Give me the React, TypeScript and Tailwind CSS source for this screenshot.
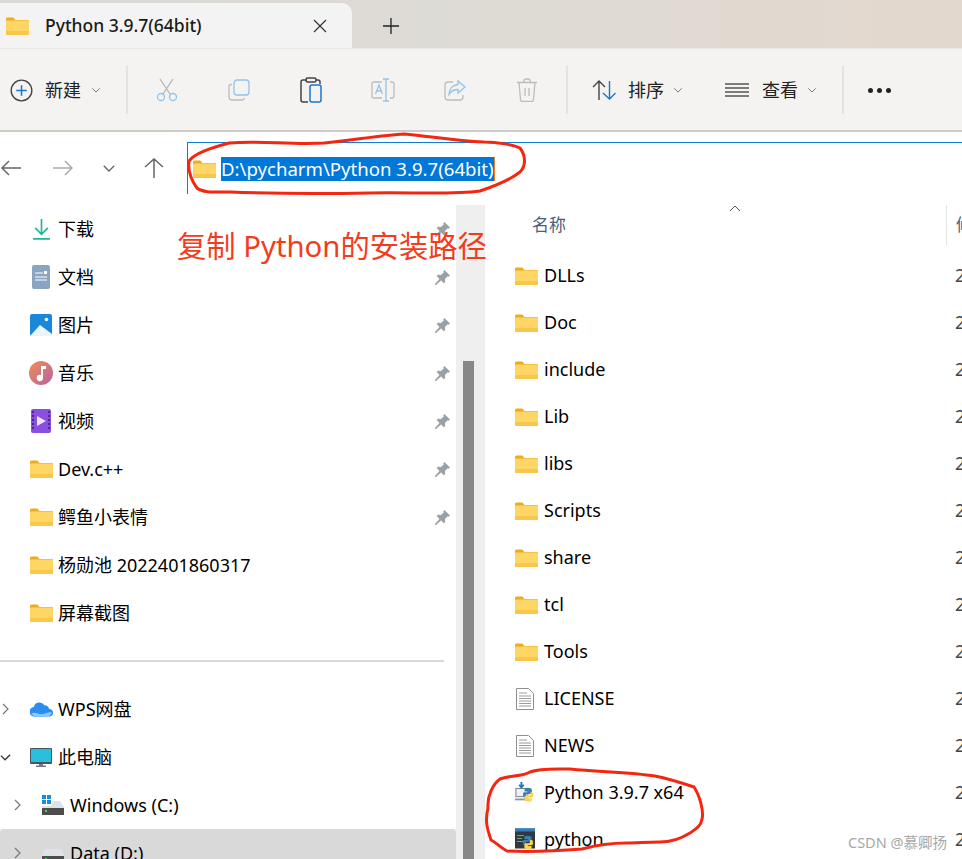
import React from 'react';

const FONT = '"Noto Sans", "Noto Sans CJK SC", sans-serif';

function Folder({ className = 'w-[23px] h-[18px]' }: { className?: string }) {
  return (
    <svg viewBox="0 0 24 18" preserveAspectRatio="none" className={className}>
      <path d="M0 2a1.500 1.500 0 0 1 1.500-1.500h6L10 3h13a1 1 0 0 1 1 1v4H0z" fill="#f0ab1a" />
      <rect x="0" y="3.500" width="24" height="14.500" rx="1" fill="#fdd666" />
      <rect x="0" y="14" width="24" height="4" rx="1" fill="#f8c64a" />
    </svg>
  );
}

function Chevron({ dir = 'down', className = '' }: { dir?: 'down' | 'right'; className?: string }) {
  return (
    <svg viewBox="0 0 12 12" className={className} fill="none" stroke="currentColor" strokeWidth="1.200">
      {dir === 'down' ? <path d="M1.500 4l4.500 4.500L10.500 4" /> : <path d="M4 1l5 5-5 5" />}
    </svg>
  );
}

function Pin() {
  return (
    <svg viewBox="0 0 18 18" className="w-[17px] h-[17px]" fill="#98a1a8">
      <path d="M11 1l6 6-1.400 1.200-1-.6-3 3 .3 3.200-1.400 1.400-3-3L2 17l-1 0 0-1 4.800-5.500-3-3 1.400-1.400 3.200.3 3-3-.6-1z" />
    </svg>
  );
}

function Sep() {
  return <div className="w-[2px] h-[48px] bg-[#e3e2e0]" />;
}

function ToolIcon({ children }: { children: React.ReactNode }) {
  return <div className="w-[72px] flex items-center justify-center">{children}</div>;
}

function NavItem({ icon, label, pin }: { icon: React.ReactNode; label: string; pin?: boolean }) {
  return (
    <div className="h-[48px] flex items-center">
      <div className="w-[30px] ml-[26px] flex justify-center shrink-0">{icon}</div>
      <span className="ml-[2px] text-[18px] text-black whitespace-nowrap">{label}</span>
      {pin && (
        <div className="ml-auto mr-[5px]">
          <Pin />
        </div>
      )}
    </div>
  );
}

function DriveIcon({ win }: { win?: boolean }) {
  return (
    <svg viewBox="0 0 22 20" className="w-[22px] h-[20px]">
      {win && (
        <g fill="#1a8ce0">
          <rect x="0" y="0" width="4" height="4" />
          <rect x="5" y="0" width="4" height="4" />
          <rect x="0" y="5" width="4" height="4" />
          <rect x="5" y="5" width="4" height="4" />
        </g>
      )}
      <path d={win ? 'M0 11h9l2-5h7l4 6v1H0z' : 'M0 12l3-6h16l3 6v1H0z'} fill="#dfe2e6" />
      <rect x="0" y="13" width="22" height="7" fill="#4d4d4d" />
      <rect x="3" y="15" width="2" height="2" fill="#3fdc4a" />
    </svg>
  );
}

function TextFile() {
  return (
    <svg viewBox="0 0 18 22" className="w-[18px] h-[22px] mr-[4px]" fill="none">
      <path d="M.5.5h12l5 5v16H.5z" fill="#fff" stroke="#8f8f8f" />
      <path d="M3 5h8M3 8h12M3 10.500h12M3 13h12M3 15.500h12M3 18h12" stroke="#9a9a9a" />
    </svg>
  );
}

function Snake({ x, y }: { x: number; y: number }) {
  return (
    <g transform={`translate(${x} ${y})`}>
      <path d="M6 0c-3 0-4 1-4 3v2H7v1H1.500C0 6 0 8 0 9.500S.5 13 2 13h2v-2.500c0-1.300 1-2 2-2h4c1 0 2-1 2-2V3c0-2-2-3-6-3z" fill="#3d7cb2" />
      <path d="M8 19c3 0 4-1 4-3v-2H7v-1h5.500c1.500 0 1.500-2 1.500-3.500S13.500 6 12 6h-2v2.500c0 1.300-1 2-2 2H4c-1 0-2 1-2 2V16c0 2 2 3 6 3z" fill="#fcd54c" />
    </g>
  );
}

function InstallerIcon() {
  return (
    <svg viewBox="0 0 24 24" className="w-[24px] h-[24px] mr-[2px]">
      <rect x="1" y="7" width="13" height="9" fill="#eef1f4" stroke="#6b7680" />
      <path d="M0 18h14v2H0z" fill="#8c96a0" />
      <path d="M7 0v5M4.500 3L7 6l2.500-3" stroke="#1778cf" strokeWidth="2" fill="none" />
      <g transform="scale(.8) translate(11 8)">
        <Snake x={0} y={0} />
      </g>
    </svg>
  );
}

function PythonConsole() {
  return (
    <svg viewBox="0 0 22 22" className="w-[23px] h-[23px] mr-[2px]">
      <rect x="0" y="0" width="20" height="20" fill="#2e3a40" />
      <rect x="0" y="0" width="20" height="3" fill="#2f7fc4" />
      <path d="M2 7h7M2 10h5M2 13h6" stroke="#57b85a" />
      <g transform="scale(.72) translate(11 10)">
        <Snake x={0} y={0} />
      </g>
    </svg>
  );
}

const files: { name: string; kind: 'folder' | 'text' | 'installer' | 'console' }[] = [
  { name: 'DLLs', kind: 'folder' },
  { name: 'Doc', kind: 'folder' },
  { name: 'include', kind: 'folder' },
  { name: 'Lib', kind: 'folder' },
  { name: 'libs', kind: 'folder' },
  { name: 'Scripts', kind: 'folder' },
  { name: 'share', kind: 'folder' },
  { name: 'tcl', kind: 'folder' },
  { name: 'Tools', kind: 'folder' },
  { name: 'LICENSE', kind: 'text' },
  { name: 'NEWS', kind: 'text' },
  { name: 'Python 3.9.7 x64', kind: 'installer' },
  { name: 'python', kind: 'console' },
];

function FileRow({ name, kind }: { name: string; kind: string }) {
  return (
    <div className="h-[47px] flex items-center shrink-0">
      <div className="w-[24px] ml-[30px] flex justify-center shrink-0">
        {kind === 'folder' && <Folder className="w-[23px] h-[18px] mr-[1px]" />}
        {kind === 'text' && <TextFile />}
        {kind === 'installer' && <InstallerIcon />}
        {kind === 'console' && <PythonConsole />}
      </div>
      <span className="ml-[5px] w-[411px] shrink-0 text-[18px] text-black whitespace-nowrap">{name}</span>
      <span className="shrink-0 text-[18px] text-[#444] whitespace-nowrap">2021/9/5</span>
    </div>
  );
}

export default function App() {
  return (
    <div className="relative w-[962px] h-[859px] overflow-hidden bg-white" style={{ fontFamily: FONT }}>
      {/* tab strip */}
      <div className="h-[48px] pt-[3px] flex bg-gradient-to-r from-[#dcdad7] via-[#dedbd5] to-[#e3d8cd]">
        <div className="w-[352px] h-[45px] bg-[#f3f3f3] rounded-tr-[10px] flex items-center">
          <Folder className="w-[23px] h-[18px] ml-[6px] shrink-0" />
          <span className="ml-[16px] w-[268px] shrink-0 text-[17.500px] font-medium text-[#1a1a1a] whitespace-nowrap">Python 3.9.7(64bit)</span>
          <svg viewBox="0 0 14 14" className="w-[14px] h-[14px]" stroke="#333" strokeWidth="1.200">
            <path d="M1 1l12 12M13 1L1 13" />
          </svg>
        </div>
        <div className="ml-[31px] flex items-center h-[45px]">
          <svg viewBox="0 0 16 16" className="w-[16px] h-[16px]" stroke="#222" strokeWidth="1.300">
            <path d="M8 0v16M0 8h16" />
          </svg>
        </div>
      </div>

      {/* toolbar */}
      <div className="h-[84px] pt-[1px] flex items-center bg-[#f4f3f1] border-t border-[#e9e8e6] border-b-2 border-b-[#cfcbc7]">
        <svg viewBox="0 0 24 24" className="w-[23px] h-[23px] ml-[10px]" fill="none">
          <circle cx="12" cy="12" r="10.800" stroke="#444" strokeWidth="1.400" />
          <path d="M12 6.500v11M6.500 12h11" stroke="#1778cf" strokeWidth="1.600" />
        </svg>
        <span className="ml-[12px] text-[18px] text-[#222]">新建</span>
        <Chevron className="w-[10px] h-[10px] ml-[10px] text-[#777]" />
        <div className="ml-[25px]">
          <Sep />
        </div>
        <div className="flex ml-[3px]">
          <ToolIcon>
            <svg viewBox="0 0 22 24" className="w-[22px] h-[24px]" fill="none" strokeWidth="1.300">
              <path d="M4 1l10 15M17 1L7 16" stroke="#b5b5b5" />
              <circle cx="5" cy="19" r="3.500" stroke="#92c3ec" />
              <circle cx="17" cy="19" r="3.500" stroke="#92c3ec" />
            </svg>
          </ToolIcon>
          <ToolIcon>
            <svg viewBox="0 0 22 22" className="w-[22px] h-[22px]" fill="none" strokeWidth="1.300">
              <path d="M4 5.500H3a2 2 0 0 0-2 2V18a3 3 0 0 0 3 3h10a2 2 0 0 0 2-2" stroke="#bdbdbd" />
              <rect x="6" y="1" width="15" height="15" rx="3" stroke="#92c3ec" />
            </svg>
          </ToolIcon>
          <ToolIcon>
            <svg viewBox="0 0 22 26" className="w-[22px] h-[26px]" fill="none" strokeWidth="1.500">
              <path d="M7 3H3a2 2 0 0 0-2 2v18a2 2 0 0 0 2 2h5M16 3h2a2 2 0 0 1 2 2v2" stroke="#444" />
              <rect x="6" y="1" width="10" height="4" rx="1.500" stroke="#444" />
              <rect x="10" y="8" width="11" height="17" rx="2" fill="#f4f3f1" stroke="#1778cf" />
            </svg>
          </ToolIcon>
          <ToolIcon>
            <svg viewBox="0 0 24 24" className="w-[24px] h-[24px]" fill="none" strokeWidth="1.300">
              <path d="M11 4H3a2 2 0 0 0-2 2v12a2 2 0 0 0 2 2h8M19 4h2a2 2 0 0 1 2 2v12a2 2 0 0 1-2 2h-2" stroke="#bdbdbd" />
              <path d="M15 1v22M12 1h6M12 23h6" stroke="#92c3ec" />
              <path d="M4.500 16L8 7l3.500 9M6 13h4" stroke="#92c3ec" />
            </svg>
          </ToolIcon>
          <ToolIcon>
            <svg viewBox="0 0 22 22" className="w-[22px] h-[22px]" fill="none" strokeWidth="1.300">
              <path d="M9 3H4a3 3 0 0 0-3 3v12a3 3 0 0 0 3 3h12a3 3 0 0 0 3-3v-2" stroke="#bdbdbd" />
              <path d="M14 2l7 6-7 6v-3.500c-4 0-7 1.500-9 5 0-6 4-9.500 9-10z" stroke="#92c3ec" />
            </svg>
          </ToolIcon>
          <ToolIcon>
            <svg viewBox="0 0 22 24" className="w-[22px] h-[24px]" fill="none" stroke="#bdbdbd" strokeWidth="1.300">
              <path d="M1 4.500h20M3 4.500l1.500 17a2 2 0 0 0 2 2h9a2 2 0 0 0 2-2l1.500-17M8 4.500V3a2 2 0 0 1 2-2h2a2 2 0 0 1 2 2v1.500M9 10v8M13 10v8" />
            </svg>
          </ToolIcon>
        </div>
        <div className="ml-[3px]">
          <Sep />
        </div>
        <svg viewBox="0 0 24 20" className="w-[24px] h-[20px] ml-[24px]" fill="none" strokeWidth="1.400">
          <path d="M1 7l6-6 6 6M7 1v19" stroke="#444" />
          <path d="M11 13l6.500 6 6-6M17.500 1v18" stroke="#1778cf" />
        </svg>
        <span className="ml-[12px] text-[18px] text-[#222]">排序</span>
        <Chevron className="w-[10px] h-[10px] ml-[9px] text-[#777]" />
        <svg viewBox="0 0 24 14" className="w-[24px] h-[14px] ml-[42px]" fill="none" stroke="#555" strokeWidth="1.400">
          <path d="M0 1h24M0 5h24M0 9h24M0 13h24" />
        </svg>
        <span className="ml-[13px] text-[18px] text-[#222]">查看</span>
        <Chevron className="w-[10px] h-[10px] ml-[9px] text-[#777]" />
        <div className="ml-[25px]">
          <Sep />
        </div>
        <div className="ml-[24px] flex gap-[4px]">
          <div className="w-[5px] h-[5px] rounded-full bg-[#222]" />
          <div className="w-[5px] h-[5px] rounded-full bg-[#222]" />
          <div className="w-[5px] h-[5px] rounded-full bg-[#222]" />
        </div>
      </div>

      {/* address bar */}
      <div className="h-[73px] flex items-start">
        <div className="w-[187px] h-[52px] mt-[10px] flex items-center shrink-0">
          <svg viewBox="0 0 20 16" className="w-[20px] h-[16px] ml-[1px]" fill="none" stroke="#666" strokeWidth="1.500">
            <path d="M8 1L1 8l7 7M1 8h19" />
          </svg>
          <svg viewBox="0 0 20 16" className="w-[20px] h-[16px] ml-[32px]" fill="none" stroke="#aaa" strokeWidth="1.500">
            <path d="M12 1l7 7-7 7M0 8h19" />
          </svg>
          <Chevron className="w-[14px] h-[14px] ml-[29px] text-[#666]" />
          <svg viewBox="0 0 20 20" className="w-[20px] h-[20px] ml-[28px]" fill="none" stroke="#666" strokeWidth="1.500">
            <path d="M1 9l9-8 9 8M10 1v19" />
          </svg>
        </div>
        <div className="flex-1 h-[52px] mt-[10px] border-t border-l border-[#0f7dd6] flex items-center">
          <Folder className="w-[23px] h-[18px] ml-[5px] shrink-0" />
          <span className="ml-[5px] text-[18.600px] leading-[24px] text-white bg-[#0078d7] whitespace-nowrap border-r border-[#e67e22]">
            D:\pycharm\Python 3.9.7(64bit)
          </span>
        </div>
      </div>

      {/* body */}
      <div className="flex h-[654px]">
        <div className="w-[456px] shrink-0 overflow-hidden">
          <NavItem
            pin
            label="下载"
            icon={
              <svg viewBox="0 0 16 20" className="w-[17px] h-[21px]" fill="none" stroke="#1fb893" strokeWidth="1.600">
                <path d="M8 0v14M2 8.500l6 6 6-6M0 19h16" />
              </svg>
            }
          />
          <NavItem
            pin
            label="文档"
            icon={
              <svg viewBox="0 0 18 24" className="w-[18px] h-[24px]">
                <rect width="18" height="24" rx="2" fill="#8ba4c0" />
                <path d="M3 8h8M3 12h12M3 15h12" stroke="#fff" />
                <rect x="12" y="6" width="3" height="3" fill="#fff" />
              </svg>
            }
          />
          <NavItem
            pin
            label="图片"
            icon={
              <svg viewBox="0 0 22 22" className="w-[22px] h-[22px]">
                <rect width="22" height="22" rx="2" fill="#1a87d8" />
                <path d="M0 22l10-11 12 9v2z" fill="#eaf4fc" />
                <circle cx="16.500" cy="5.500" r="1.800" fill="#fff" />
              </svg>
            }
          />
          <NavItem
            pin
            label="音乐"
            icon={
              <svg viewBox="0 0 24 24" className="w-[24px] h-[24px]">
                <defs>
                  <linearGradient id="music" x1="0" y1="0" x2="1" y2="1">
                    <stop offset="0" stopColor="#ef8f4f" />
                    <stop offset="1" stopColor="#b761a8" />
                  </linearGradient>
                </defs>
                <circle cx="12" cy="12" r="12" fill="url(#music)" />
                <path d="M12 5h5v3h-3v9a3.200 3.200 0 1 1-2-3z" fill="#fff" />
              </svg>
            }
          />
          <NavItem
            pin
            label="视频"
            icon={
              <svg viewBox="0 0 20 24" className="w-[20px] h-[24px]">
                <rect width="20" height="24" rx="2" fill="#8a4fe0" />
                <path d="M6 7l9 5-9 5z" fill="#ede4fb" />
                <path d="M2 2v20M18 2v20" stroke="#4a2a85" strokeWidth="2" strokeDasharray="2 2" />
              </svg>
            }
          />
          <NavItem pin label="Dev.c++" icon={<Folder />} />
          <NavItem pin label="鳄鱼小表情" icon={<Folder />} />
          <NavItem label="杨勋池 2022401860317" icon={<Folder />} />
          <NavItem label="屏幕截图" icon={<Folder />} />
          <div className="h-[48px] flex items-center">
            <div className="w-[444px] h-[2px] bg-[#d9d9d9]" />
          </div>
          <div className="relative">
            <Chevron dir="right" className="absolute left-[-1px] top-[18px] w-[12px] h-[12px] text-[#777]" />
            <NavItem
              label="WPS网盘"
              icon={
                <svg viewBox="0 0 24 16" className="w-[23px] h-[16px]">
                  <path d="M5 16a5 5 0 0 1-1-10 6 6 0 0 1 11-2 5 5 0 0 1 5 4 4 4 0 0 1 0 8z" fill="#2c8df0" />
                  <path d="M1 13c5-3 8 2 14 0s6-2 8-1l-3 4H5z" fill="#8cc8fa" />
                </svg>
              }
            />
          </div>
          <div className="relative">
            <svg viewBox="0 0 12 12" className="absolute left-0 top-[19px] w-[11px] h-[11px]" fill="none" stroke="#333" strokeWidth="1.400">
              <path d="M1 4l4.500 4.500L11 3" />
            </svg>
            <NavItem
              label="此电脑"
              icon={
                <svg viewBox="0 0 22 19" className="w-[22px] h-[19px]">
                  <rect width="22" height="16" rx="1" fill="#48565f" />
                  <rect x="1" y="1" width="20" height="13" fill="#29c0de" />
                  <path d="M9 16h4v1.500h3V19H6v-1.500h3z" fill="#778" />
                </svg>
              }
            />
          </div>
          <div className="relative h-[48px] flex items-center">
            <Chevron dir="right" className="ml-[11px] w-[12px] h-[12px] text-[#777]" />
            <div className="ml-[19px]">
              <DriveIcon win />
            </div>
            <span className="ml-[6px] text-[18px] text-black whitespace-nowrap">Windows (C:)</span>
          </div>
          <div className="h-[48px] flex items-center bg-[#d9d9d9] rounded-[3px]">
            <Chevron dir="right" className="ml-[11px] w-[12px] h-[12px] text-[#777]" />
            <div className="ml-[19px]">
              <DriveIcon />
            </div>
            <span className="ml-[6px] text-[18px] text-black whitespace-nowrap">Data (D:)</span>
          </div>
        </div>

        {/* scrollbar */}
        <div className="w-[28px] shrink-0 bg-[#efefef] pl-[7px] pt-[156px]">
          <div className="w-[11px] h-[498px] bg-[#888888]" />
        </div>

        {/* file list */}
        <div className="flex-1 flex flex-col border-l border-[#ececec] overflow-hidden">
          <div className="h-[40px] shrink-0 flex items-center relative">
            <span className="ml-[47px] w-[414px] shrink-0 text-[17px] text-[#4c607a]">名称</span>
            <div className="h-[40px] w-px shrink-0 bg-[#e4e4e4]" />
            <span className="ml-[9px] shrink-0 text-[17px] text-[#4c607a] whitespace-nowrap">修改日期</span>
            <svg viewBox="0 0 12 6" className="absolute left-[244px] top-0 w-[12px] h-[6px]" fill="none" stroke="#555">
              <path d="M1 6l5-5 5 5" />
            </svg>
          </div>
          <div className="h-[7px] shrink-0" />
          {files.map(f => (
            <FileRow key={f.name} name={f.name} kind={f.kind} />
          ))}
        </div>
      </div>

      {/* hand-drawn notes on top of the screenshot */}
      <svg viewBox="0 0 962 859" className="absolute inset-0 w-[962px] h-[859px] pointer-events-none" fill="none" stroke="#f5260f" strokeWidth="3" strokeLinejoin="round">
        <path d="M189 161c6-8 22-13 40-18 30-3 60 2 95 0 30-3 60-8 80-9 25 2 50 7 80 8 14 0 30 3 36 6 6 8 6 18 0 24-10 8-25 14-40 19-30 4-70 1-110 2-50 1-90 1-140-1-15 0-27 1-33-4-6-8-9-18-8-27z" />
        <path d="M488 808c-1-12 5-24 12-29 10-4 22-2 30-7 10-4 25-3 40-3 30 3 60 3 85 7 15 3 30 8 39 11 6 9 10 25 8 32-1 7-6 10-12 14-8 5-18 9-30 9-14 0-22 1-33 1-18 0-34 3-45 6-25 2-55 3-75 2-8-4-10-8-16-11-2-7-7-16-3-32z" />
      </svg>
      <span className="absolute left-[177px] top-[226px] text-[29.300px] leading-[40px] text-[#f23c20] whitespace-nowrap">复制 Python的安装路径</span>
      <span className="absolute left-[848px] top-[832px] text-[14.500px] leading-[20px] text-[#a8a8a8] whitespace-nowrap">CSDN @慕卿扬</span>
    </div>
  );
}
